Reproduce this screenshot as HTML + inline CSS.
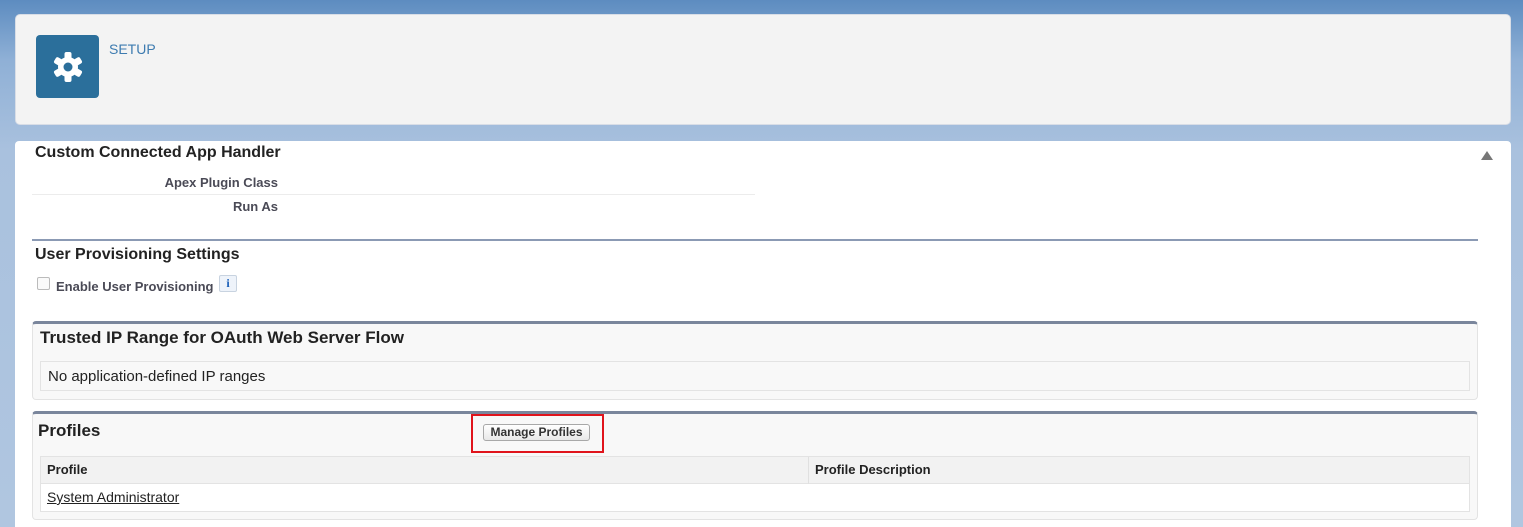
<!DOCTYPE html>
<html><head><style>
*{margin:0;padding:0;box-sizing:border-box}
html,body{width:1523px;height:527px;overflow:hidden}
body{font-family:"Liberation Sans",Arial,sans-serif;background:linear-gradient(180deg,#5d8cc0 0px,#8fb0d6 60px,#a9c1de 150px,#b0c6e0 527px);position:relative}
.abs{position:absolute}
.hdr{left:15px;top:14px;width:1496px;height:111px;background:#f3f3f3;border-radius:5px;border:1px solid #d8dde6}
.main{left:15px;top:141px;width:1496px;height:386px;background:#fff;border-radius:4px 4px 0 0}
.b{font-weight:bold;color:#222}
.lbl{font-size:13px;font-weight:bold;color:#4a4a56;text-align:right;width:248px}
.blk{left:32px;width:1446px;background:#f8f8f8;border-top:3px solid #7a869c;border-radius:4px;border-left:1px solid #e3e3e3;border-right:1px solid #e3e3e3;border-bottom:1px solid #e3e3e3}
</style></head><body>
<div class="abs hdr"></div>
<div class="abs" style="left:36px;top:35px;width:63px;height:63px;background:#2b6f9b;border-radius:4px">
<svg width="63" height="63" viewBox="0 0 63 63"><g transform="translate(32,32)" fill="#fff">
<circle r="10"/>
<g><rect x="-3.5" y="-15" width="7" height="30" rx="2"/><rect x="-3.5" y="-15" width="7" height="30" rx="2" transform="rotate(60)"/><rect x="-3.5" y="-15" width="7" height="30" rx="2" transform="rotate(120)"/></g>
<circle r="4.5" fill="#2b6f9b"/></g></svg></div>
<div class="abs" style="left:109px;top:41px;font-size:14px;color:#3d7bb0">SETUP</div>
<div class="abs main"></div>
<div class="abs" style="left:1481px;top:151px;width:0;height:0;border-left:6px solid transparent;border-right:6px solid transparent;border-bottom:9px solid #777"></div>
<div class="abs b" style="left:35px;top:144px;font-size:16px">Custom Connected App Handler</div>
<div class="abs lbl" style="left:30px;top:175px">Apex Plugin Class</div>
<div class="abs" style="left:32px;top:194px;width:723px;height:1px;background:#ececec"></div>
<div class="abs lbl" style="left:30px;top:199px">Run As</div>
<div class="abs" style="left:32px;top:239px;width:1446px;height:2px;background:#8b9ab4"></div>
<div class="abs b" style="left:35px;top:246px;font-size:16px">User Provisioning Settings</div>
<div class="abs" style="left:37px;top:277px;width:13px;height:13px;border:1px solid #bbb;border-radius:2px;background:#fafafa"></div>
<div class="abs" style="left:56px;top:279px;font-size:13px;font-weight:bold;color:#4a4a56">Enable User Provisioning</div>
<div class="abs" style="left:219px;top:275px;width:18px;height:17px;border:1px solid #c8d3e0;border-radius:2px;background:#eef3fa;color:#1b5fb8;font:bold 12px 'Liberation Serif',serif;text-align:center;line-height:15px">i</div>
<div class="abs blk" style="top:321px;height:79px"></div>
<div class="abs b" style="left:40px;top:328px;font-size:17px">Trusted IP Range for OAuth Web Server Flow</div>
<div class="abs" style="left:40px;top:361px;width:1430px;height:30px;border:1px solid #e3e3e3;background:#f8f8f8;font-size:15px;color:#222;padding:6px 0 0 7px">No application-defined IP ranges</div>
<div class="abs blk" style="top:411px;height:109px"></div>
<div class="abs b" style="left:38px;top:421px;font-size:17px">Profiles</div>
<div class="abs" style="left:483px;top:424px;width:107px;height:17px;border:1px solid #a8a8a8;border-radius:3px;background:linear-gradient(#fff,#e8e8e8);font-size:12px;font-weight:bold;color:#333;text-align:center;line-height:15px">Manage Profiles</div>
<div class="abs" style="left:471px;top:414px;width:133px;height:39px;border:2px solid #e0141c"></div>
<div class="abs" style="left:40px;top:456px;width:1430px;height:56px;border:1px solid #e3e3e3;background:#fff"></div>
<div class="abs" style="left:41px;top:457px;width:1428px;height:27px;background:#f2f2f2;border-bottom:1px solid #e3e3e3"></div>
<div class="abs" style="left:808px;top:457px;width:1px;height:27px;background:#e0e0e0"></div>
<div class="abs" style="left:47px;top:462px;font-size:13px;font-weight:bold;color:#222">Profile</div>
<div class="abs" style="left:815px;top:462px;font-size:13px;font-weight:bold;color:#222">Profile Description</div>
<div class="abs" style="left:47px;top:489px;font-size:14px;color:#222;text-decoration:underline">System Administrator</div>
</body></html>
